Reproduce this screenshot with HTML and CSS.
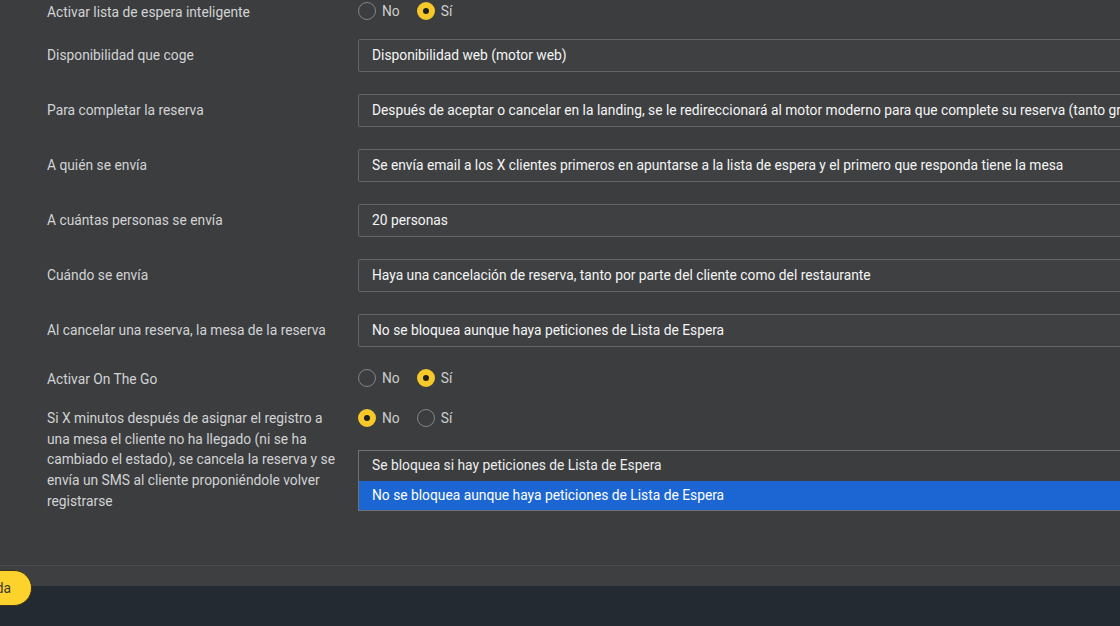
FILE: index.html
```html
<!DOCTYPE html>
<html lang="es">

<head>
  <meta charset="UTF-8">
  <meta name="viewport" content="width=device-width, initial-scale=1.0">
  <title>Lista de espera</title>
  <link rel="stylesheet" href="styles.css">
</head>

<body>
  <div class="panel">
    <!-- form -->
    <div class="form">
      <div class="row row-radio row-first">
        <div class="label">Activar lista de espera inteligente</div>
        <div class="field radios">
          <label class="radio"><span class="dot"></span>No</label>
          <label class="radio"><span class="dot on"></span>Sí</label>
        </div>
      </div>

      <div class="row">
        <div class="label">Disponibilidad que coge</div>
        <div class="field"><div class="input">Disponibilidad web (motor web)</div></div>
      </div>

      <div class="row">
        <div class="label">Para completar la reserva</div>
        <div class="field"><div class="input">Después de aceptar o cancelar en la landing, se le redireccionará al motor moderno para que complete su reserva (tanto grupos como individuales)</div></div>
      </div>

      <div class="row">
        <div class="label">A quién se envía</div>
        <div class="field"><div class="input">Se envía email a los X clientes primeros en apuntarse a la lista de espera y el primero que responda tiene la mesa</div></div>
      </div>

      <div class="row">
        <div class="label">A cuántas personas se envía</div>
        <div class="field"><div class="input">20 personas</div></div>
      </div>

      <div class="row">
        <div class="label">Cuándo se envía</div>
        <div class="field"><div class="input">Haya una cancelación de reserva, tanto por parte del cliente como del restaurante</div></div>
      </div>

      <div class="row">
        <div class="label">Al cancelar una reserva, la mesa de la reserva</div>
        <div class="field"><div class="input">No se bloquea aunque haya peticiones de Lista de Espera</div></div>
      </div>

      <div class="row row-radio">
        <div class="label">Activar On The Go</div>
        <div class="field radios">
          <label class="radio"><span class="dot"></span>No</label>
          <label class="radio"><span class="dot on"></span>Sí</label>
        </div>
      </div>

      <div class="row row-long">
        <div class="label">Si X minutos después de asignar el registro a una mesa el cliente no ha llegado (ni se ha cambiado el estado), se cancela la reserva y se envía un SMS al cliente proponiéndole volver registrarse</div>
        <div class="field">
          <div class="radios">
            <label class="radio"><span class="dot on"></span>No</label>
            <label class="radio"><span class="dot"></span>Sí</label>
          </div>
          <ul class="options">
            <li>Se bloquea si hay peticiones de Lista de Espera</li>
            <li class="selected">No se bloquea aunque haya peticiones de Lista de Espera</li>
          </ul>
        </div>
      </div>
    </div>
    <!-- footer -->
    <div class="footer"></div>
  </div>

  <button class="btn-save">Guardar búsqueda</button>
</body>

</html>
```

FILE: styles.css
```css
/* reset start */
html,
body {
  margin: 0;
  height: 100%;
  overflow: hidden;
}

body {
  background: #232a31;
  font-family: Roboto, "Noto Sans", sans-serif;
  font-size: 13.8px;
  color: #d2d3d4;
  position: relative;
}

ul {
  margin: 0;
  padding: 0;
  list-style: none;
}

/* reset end */

/* panel start */
.panel {
  background: #3b3d3f;
  width: 1400px;
}

.form {
  padding: 2px 0 53px 47px;
}

.row {
  display: flex;
  align-items: center;
  margin-bottom: 22px;
}

.row-first {
  margin-bottom: 19px;
}

.row .label {
  width: 296px;
  flex-shrink: 0;
  margin-right: 15px;
  line-height: 20.7px;
}

.row-radio {
  height: 18px;
}

.row-radio .label {
  padding-top: 3px;
}

.row-long {
  align-items: flex-start;
  margin-bottom: 0;
}

.row-long .label {
  margin-top: -1px;
}

.field {
  width: 1000px;
}

/* panel end */

/* input start */
.input {
  height: 31px;
  line-height: 30px;
  border: 1px solid #626466;
  border-radius: 2px;
  background: #3e4042;
  padding: 0 13px;
  color: #f5f5f5;
  white-space: nowrap;
  overflow: hidden;
}

/* input end */

/* radio start */
.radios {
  display: flex;
  align-items: center;
  height: 18px;
}

.radio {
  display: flex;
  align-items: center;
  margin-right: 17px;
  color: #cdcecf;
}

.radio .dot {
  width: 16px;
  height: 16px;
  border: 1px solid #828486;
  border-radius: 50%;
  margin-right: 6px;
  box-sizing: content-box;
}

.radio .dot.on {
  width: 6px;
  height: 6px;
  border: 6px solid #f6c92b;
  background: #1d1f21;
}

/* radio end */

/* options start */
.options {
  margin-top: 23px;
  border: 1px solid #6e7072;
  background: #3b3d3f;
  color: #eeeeee;
}

.options li {
  height: 29.5px;
  line-height: 29.5px;
  padding: 0 13px;
  white-space: nowrap;
}

.options .selected {
  background: #1b66d3;
  color: #ffffff;
}

/* options end */

/* footer start */
.footer {
  height: 20px;
  border-top: 1px solid #4b4d4f;
  background: #3d3f41;
}

.btn-save {
  position: absolute;
  left: 32px;
  top: 570px;
  transform: translateX(-100%);
  height: 36px;
  padding: 0 20px 0 18px;
  border: 1px solid #3a3318;
  border-radius: 18px;
  background: #fdd22c;
  color: #3a3a3a;
  font-family: Roboto, "Noto Sans", sans-serif;
  font-size: 13.8px;
  white-space: nowrap;
}

/* footer end */
```
